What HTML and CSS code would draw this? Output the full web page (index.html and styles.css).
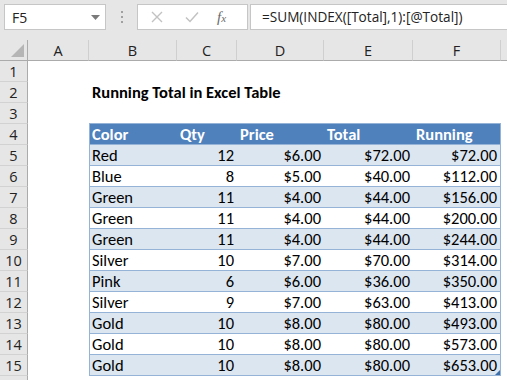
FILE: index.html
```html
<!DOCTYPE html>
<html lang="en">
<head>
    <meta charset="UTF-8">
    <title>Running Total in Excel Table</title>
    <link rel="stylesheet" href="styles.css">
</head>
<body>
    <div class="toolbar">
        <div class="name-box">
            <span>F5</span>
            <svg class="caret" width="9" height="5" viewBox="0 0 9 5"><path d="M0 0h9L4.5 5z" fill="#7a7a7a"/></svg>
        </div>
        <div class="grip"><i></i><i></i><i></i></div>
        <div class="fx-box">
            <svg width="12" height="12" viewBox="0 0 12 12"><path d="M1 1l10 10M11 1L1 11" stroke="#c2c2c2" stroke-width="1.4"/></svg>
            <svg width="14" height="12" viewBox="0 0 14 12"><path d="M1 6.5l4 4L13 1.5" stroke="#c2c2c2" stroke-width="1.5" fill="none"/></svg>
            <span class="fx">f<small>x</small></span>
        </div>
        <div class="formula">=SUM(INDEX([Total],1):[@Total])</div>
    </div>

    <div class="sheet">
        <div class="row head">
            <div class="corner"></div>
            <div class="col">A</div><div class="col">B</div><div class="col">C</div>
            <div class="col">D</div><div class="col">E</div><div class="col">F</div><div class="col last"></div>
        </div>
        <div class="row"><div class="num">1</div></div>
        <div class="row"><div class="num">2</div><div></div><div class="title">Running Total in Excel Table</div></div>
        <div class="row"><div class="num">3</div><div></div><div class="top"></div><div class="top"></div><div class="top"></div><div class="top"></div><div class="top"></div></div>
        <div class="row thead">
            <div class="num">4</div><div></div>
            <div class="c first">Color</div><div class="c">Qty</div><div class="c">Price</div><div class="c">Total</div><div class="c end">Running</div>
        </div>
        <div class="row band"><div class="num">5</div><div></div><div class="c first">Red</div><div class="c r">12</div><div class="c r">$6.00</div><div class="c r">$72.00</div><div class="c r end">$72.00</div></div>
        <div class="row"><div class="num">6</div><div></div><div class="c first">Blue</div><div class="c r">8</div><div class="c r">$5.00</div><div class="c r">$40.00</div><div class="c r end">$112.00</div></div>
        <div class="row band"><div class="num">7</div><div></div><div class="c first">Green</div><div class="c r">11</div><div class="c r">$4.00</div><div class="c r">$44.00</div><div class="c r end">$156.00</div></div>
        <div class="row"><div class="num">8</div><div></div><div class="c first">Green</div><div class="c r">11</div><div class="c r">$4.00</div><div class="c r">$44.00</div><div class="c r end">$200.00</div></div>
        <div class="row band"><div class="num">9</div><div></div><div class="c first">Green</div><div class="c r">11</div><div class="c r">$4.00</div><div class="c r">$44.00</div><div class="c r end">$244.00</div></div>
        <div class="row"><div class="num">10</div><div></div><div class="c first">Silver</div><div class="c r">10</div><div class="c r">$7.00</div><div class="c r">$70.00</div><div class="c r end">$314.00</div></div>
        <div class="row band"><div class="num">11</div><div></div><div class="c first">Pink</div><div class="c r">6</div><div class="c r">$6.00</div><div class="c r">$36.00</div><div class="c r end">$350.00</div></div>
        <div class="row"><div class="num">12</div><div></div><div class="c first">Silver</div><div class="c r">9</div><div class="c r">$7.00</div><div class="c r">$63.00</div><div class="c r end">$413.00</div></div>
        <div class="row band"><div class="num">13</div><div></div><div class="c first">Gold</div><div class="c r">10</div><div class="c r">$8.00</div><div class="c r">$80.00</div><div class="c r end">$493.00</div></div>
        <div class="row"><div class="num">14</div><div></div><div class="c first">Gold</div><div class="c r">10</div><div class="c r">$8.00</div><div class="c r">$80.00</div><div class="c r end">$573.00</div></div>
        <div class="row band"><div class="num">15</div><div></div><div class="c first">Gold</div><div class="c r">10</div><div class="c r">$8.00</div><div class="c r">$80.00</div><div class="c r end handle">$653.00</div></div>
        <div class="row"><div class="num"></div></div>
    </div>
</body>
</html>
```

FILE: styles.css
```css
* {
    margin: 0;
    padding: 0;
    box-sizing: border-box;
}

body {
    background: #fff;
    color: #000;
    font-family: Carlito, 'Liberation Sans', Arial, sans-serif;
    font-size: 16.5px;
    overflow: hidden;
}

.toolbar {
    height: 40px;
    background: #e6e6e6;
    display: flex;
    align-items: flex-start;
    padding: 4px 0 0 4px;
}

.name-box {
    width: 102px;
    height: 26px;
    background: #fff;
    border: 1px solid #c6c6c6;
    display: flex;
    align-items: center;
    justify-content: space-between;
    padding: 0 5px 0 7px;
    font-family: 'Open Sans', sans-serif;
    font-size: 14px;
    color: #222;
}

.caret {
    margin-top: 1px;
}

.grip {
    width: 31px;
    height: 26px;
    display: flex;
    flex-direction: column;
    align-items: center;
    justify-content: center;
    gap: 3px;
}

.grip i {
    width: 2px;
    height: 2px;
    background: #a0a0a0;
}

.fx-box {
    width: 111px;
    height: 26px;
    background: #fff;
    border: 1px solid #c6c6c6;
    display: flex;
    align-items: center;
    padding: 0 0 0 13px;
    gap: 22px;
}

.fx {
    font-family: 'Liberation Serif', serif;
    font-style: italic;
    font-size: 15px;
    color: #6a6a6a;
    margin-left: -4px;
}

.fx small {
    font-size: 11px;
}

.formula {
    flex: 1;
    height: 26px;
    margin-left: 2px;
    background: #fff;
    border: 1px solid #c6c6c6;
    border-right: none;
    padding: 0 0 0 11px;
    font-family: 'Open Sans', sans-serif;
    font-size: 13.6px;
    line-height: 24px;
    color: #222;
}

.row {
    display: grid;
    grid-template-columns: 28px 61px 88px 60px 87px 89px 88px 1fr;
    height: 21px;
}

.row > div {
    height: 21px;
    line-height: 21px;
    border-bottom: 1px solid transparent;
    white-space: nowrap;
}

.head {
    background: #e6e6e6;
}

.head > div {
    border-bottom: 1px solid #ababab;
}

.corner {
    position: relative;
    border-right: 1px solid #ababab;
}

.corner::after {
    content: '';
    position: absolute;
    right: 3px;
    bottom: 3px;
    border-style: solid;
    border-width: 0 0 13px 13px;
    border-color: transparent transparent #b5b5b5 transparent;
}

.row > .col {
    text-align: center;
    font-family: 'Open Sans', sans-serif;
    font-size: 14.5px;
    line-height: 22px;
    color: #222;
    border-right: 1px solid #cfcfcf;
}

.row > .col.last {
    border-right: none;
}

.row > .num {
    background: #e6e6e6;
    border-right: 1px solid #ababab;
    border-bottom: 1px solid #d2d2d2;
    text-align: center;
    font-family: 'Open Sans', sans-serif;
    font-size: 14.5px;
    color: #222;
}

.title {
    font-weight: bold;
    padding-left: 3px;
    overflow: visible;
}

.row > .top {
    border-bottom: 1px solid #95b3d7;
}

.row > .c {
    border-bottom: 1px solid #95b3d7;
    padding: 0 3px;
}

.row > .first {
    border-left: 1px solid #95b3d7;
    padding-left: 2px;
}

.row > .end {
    border-right: 1px solid #95b3d7;
}

.r {
    text-align: right;
}

.thead > .c {
    background: #4f81bd;
    color: #fff;
    font-weight: bold;
}

.band > .c {
    background: #dce6f1;
}

.handle {
    position: relative;
}

.handle::after {
    content: '';
    position: absolute;
    right: 0;
    bottom: 0;
    border-style: solid;
    border-width: 0 0 5px 5px;
    border-color: transparent transparent #3d6ea8 transparent;
}
```
